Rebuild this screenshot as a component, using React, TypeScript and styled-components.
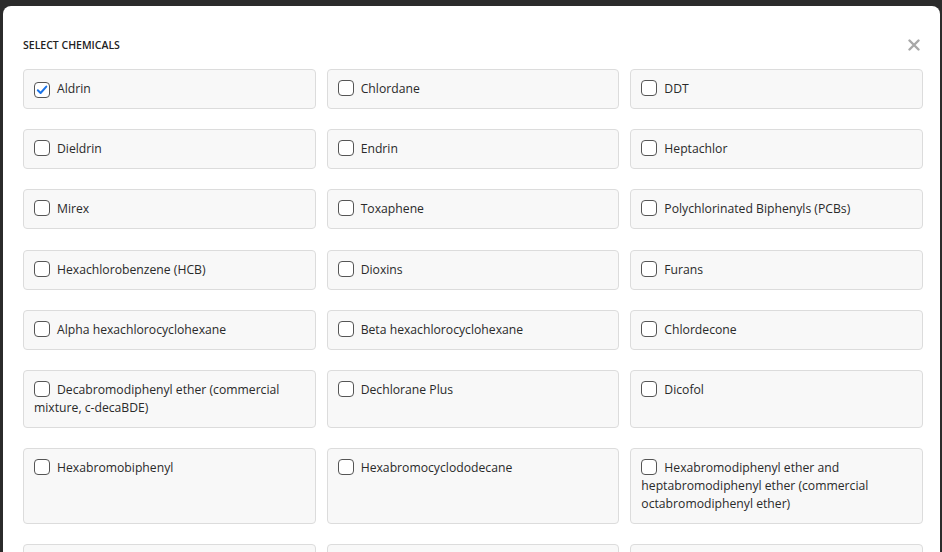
import React, { useState } from 'react';
import styled, { createGlobalStyle } from 'styled-components';

const GlobalStyle = createGlobalStyle`
  html, body {
    margin: 0;
    padding: 0;
    height: 100%;
    overflow: hidden;
    background: #2b2b2b;
  }
  * {
    box-sizing: border-box;
  }
`;

const chemicals = [
  'Aldrin',
  'Chlordane',
  'DDT',
  'Dieldrin',
  'Endrin',
  'Heptachlor',
  'Mirex',
  'Toxaphene',
  'Polychlorinated Biphenyls (PCBs)',
  'Hexachlorobenzene (HCB)',
  'Dioxins',
  'Furans',
  'Alpha hexachlorocyclohexane',
  'Beta hexachlorocyclohexane',
  'Chlordecone',
  'Decabromodiphenyl ether (commercial mixture, c-decaBDE)',
  'Dechlorane Plus',
  'Dicofol',
  'Hexabromobiphenyl',
  'Hexabromocyclododecane',
  'Hexabromodiphenyl ether and heptabromodiphenyl ether (commercial octabromodiphenyl ether)',
  'Hexachlorobutadiene',
  'Lindane',
  'Pentachlorobenzene',
];

// Styled Components
const Overlay = styled.div`
  height: 100vh;
  padding: 6px 2px 0 3px;
  font-family: 'Open Sans', 'Noto Sans', sans-serif;
`;

const Modal = styled.div`
  background: #ffffff;
  border-radius: 8px 8px 0 0;
  padding: 33px 17px 30px 20px;
  height: calc(100vh - 6px);
  overflow: hidden;
`;

const Header = styled.div`
  display: flex;
  justify-content: space-between;
  align-items: center;
  height: 12px;
  margin-bottom: 18px;
`;

const Title = styled.h2`
  margin: 0;
  font-size: 10.5px;
  font-weight: 600;
  color: #222;
  letter-spacing: 0;
  text-transform: uppercase;
`;

const CloseButton = styled.button`
  border: none;
  background: none;
  padding: 0;
  margin-right: 2px;
  width: 14px;
  height: 14px;
  display: flex;
  align-items: center;
  justify-content: center;
  cursor: pointer;
`;

const Grid = styled.div`
  display: grid;
  grid-template-columns: repeat(3, 1fr);
  column-gap: 11px;
  row-gap: 20.2px;
`;

const Card = styled.label`
  display: block;
  background: #f8f8f8;
  border: 1px solid #dcdcdc;
  border-radius: 4px;
  padding: 10px 10px;
  font-size: 12.2px;
  line-height: 18px;
  color: #2a2a2a;
  cursor: pointer;
`;

const Box = styled.span<{ $checked: boolean }>`
  display: inline-flex;
  align-items: center;
  justify-content: center;
  width: 16px;
  height: 16px;
  margin-right: 7px;
  vertical-align: -3px;
  border: 1px solid #555;
  border-radius: 4px;
  background: #fff;
`;

const HiddenInput = styled.input`
  position: absolute;
  opacity: 0;
  width: 0;
  height: 0;
`;

const Check: React.FC = () => (
  <svg width="12" height="12" viewBox="0 0 12 12">
    <path d="M1.8 6.2 L4.6 9 L10.3 2.6" fill="none" stroke="#1a73e8" strokeWidth="2" strokeLinecap="round" strokeLinejoin="round" />
  </svg>
);

const App: React.FC = () => {
  const [selected, setSelected] = useState<string[]>(['Aldrin']);

  const toggle = (name: string) => {
    setSelected((prev) =>
      prev.includes(name) ? prev.filter((n) => n !== name) : [...prev, name]
    );
  };

  return (
    <>
      <GlobalStyle />
      <Overlay>
        <Modal>
          <Header>
            <Title>Select Chemicals</Title>
            <CloseButton aria-label="Close">
              <svg width="12" height="12" viewBox="0 0 12 12">
                <path d="M1.5 1.5 L10.5 10.5 M10.5 1.5 L1.5 10.5" stroke="#a8a8a8" strokeWidth="2.4" strokeLinecap="round" />
              </svg>
            </CloseButton>
          </Header>
          <Grid>
            {chemicals.map((name) => {
              const checked = selected.includes(name);
              return (
                <Card key={name}>
                  <HiddenInput type="checkbox" checked={checked} onChange={() => toggle(name)} />
                  <Box $checked={checked}>{checked && <Check />}</Box>
                  {name}
                </Card>
              );
            })}
          </Grid>
        </Modal>
      </Overlay>
    </>
  );
};

export default App;
